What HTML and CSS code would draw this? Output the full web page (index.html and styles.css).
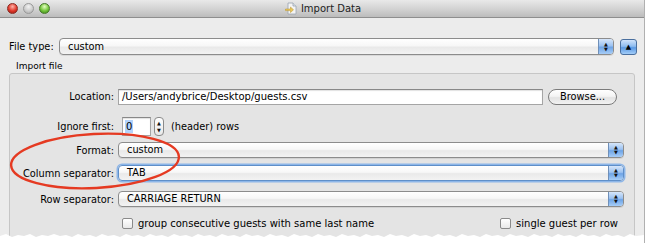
FILE: index.html
```html
<!DOCTYPE html>
<html>
<head>
<meta charset="utf-8">
<link rel="stylesheet" href="styles.css">
</head>
<body>
<div class="window">
  <div class="titlebar">
    <div class="lights">
      <span class="light red"></span>
      <span class="light gray"></span>
      <span class="light green"></span>
    </div>
    <div class="title">
      <svg class="doc-icon" width="13" height="13" viewBox="0 0 13 13">
        <path d="M3 1h5l3 3v8H3z" fill="#f4f4f4" stroke="#9aa3b0" stroke-width="0.8"/>
        <path d="M8 1v3h3" fill="#dde3ea" stroke="#9aa3b0" stroke-width="0.8"/>
        <path d="M0.5 7h5V5l3 2.8-3 2.8V8.6h-5z" fill="#e9c65a" stroke="#b8922a" stroke-width="0.5"/>
      </svg>
      <span>Import Data</span>
    </div>
  </div>

  <div class="filetype-row">
    <span class="label">File type:</span>
    <div class="select select-wide"><span class="val">custom</span><span class="arrows"><i>▲</i><i>▼</i></span></div>
    <div class="upbtn">▲</div>
  </div>

  <div class="group-label">Import file</div>
  <div class="group">
    <div class="row r1">
      <span class="label lab">Location:</span>
      <div class="field loc">/Users/andybrice/Desktop/guests.csv</div>
      <div class="button">Browse...</div>
    </div>
    <div class="row r2">
      <span class="label lab">Ignore first:</span>
      <div class="field num"><span class="sel">0</span></div>
      <div class="spinner"><i>▲</i><i>▼</i></div>
      <span class="label after">(header) rows</span>
    </div>
    <div class="row r3">
      <span class="label lab">Format:</span>
      <div class="select"><span class="val">custom</span><span class="arrows"><i>▲</i><i>▼</i></span></div>
    </div>
    <div class="row r4">
      <span class="label lab">Column separator:</span>
      <div class="select focus"><span class="val">TAB</span><span class="arrows"><i>▲</i><i>▼</i></span></div>
    </div>
    <div class="row r5">
      <span class="label lab">Row separator:</span>
      <div class="select"><span class="val">CARRIAGE RETURN</span><span class="arrows"><i>▲</i><i>▼</i></span></div>
    </div>
    <div class="row r6">
      <label class="check"><span class="box"></span>group consecutive guests with same last name</label>
      <label class="check"><span class="box"></span>single guest per row</label>
    </div>
  </div>

  <svg class="ring" width="200" height="70" viewBox="0 0 200 70">
    <ellipse cx="95" cy="33" rx="84" ry="27" transform="rotate(-3 95 33)" fill="none" stroke="#e53a22" stroke-width="2.4"/>
  </svg>

  <svg class="torn" width="645" height="10" viewBox="0 0 645 10" preserveAspectRatio="none">
    <path fill="#ffffff" d="M0 3 L6 1 L12 4 L18 2 L24 3 L30 1 L36 4 L42 2 L48 3 L54 1 L60 3 L66 2 L72 4 L78 1 L84 3 L90 2 L96 4 L102 1 L108 3 L114 2 L120 4 L126 1 L132 3 L138 2 L144 4 L150 1 L156 3 L162 2 L168 4 L174 1 L180 3 L186 2 L192 4 L198 1 L204 3 L210 2 L216 4 L222 1 L228 3 L234 2 L240 4 L246 1 L252 3 L258 2 L264 4 L270 1 L276 3 L282 2 L288 4 L294 1 L300 3 L306 2 L312 4 L318 1 L324 3 L330 2 L336 4 L342 1 L348 3 L354 2 L360 4 L366 1 L372 3 L378 2 L384 4 L390 1 L396 3 L402 2 L408 4 L414 1 L420 3 L426 2 L432 4 L438 1 L444 3 L450 2 L456 4 L462 1 L468 3 L474 2 L480 4 L486 1 L492 3 L498 2 L504 4 L510 1 L516 3 L522 2 L528 4 L534 1 L540 3 L546 2 L552 4 L558 1 L564 3 L570 2 L576 4 L582 1 L588 3 L594 2 L600 4 L606 1 L612 3 L618 2 L624 4 L630 1 L636 3 L645 2 L645 10 L0 10 Z"/>
  </svg>
</div>
</body>
</html>
```

FILE: styles.css
```css
* { box-sizing: border-box; }
html, body { margin: 0; padding: 0; }
body {
  width: 645px;
  height: 243px;
  overflow: hidden;
  font-family: "DejaVu Sans", "Lucida Grande", sans-serif;
  font-size: 9.8px;
  color: #000;
  background: #ffffff;
}
.window {
  position: relative;
  width: 645px;
  height: 243px;
  overflow: hidden;
  background: #ececec;
  border-right: 1px solid #b0b0b0;
}
.titlebar {
  position: relative;
  height: 18px;
  background: linear-gradient(#e9e9e9, #cfcfcf 60%, #bcbcbc);
  border-bottom: 1px solid #8e8e8e;
  display: flex;
  align-items: center;
  justify-content: center;
}
.lights {
  position: absolute;
  left: 7px;
  top: 3px;
  display: flex;
  gap: 5px;
}
.light {
  width: 11px;
  height: 11px;
  border-radius: 50%;
  display: block;
}
.light.red { background: radial-gradient(circle at 50% 30%, #ffb3a8, #e0372a 55%, #9b1a12); border: 1px solid #8a2a22; }
.light.gray { background: radial-gradient(circle at 50% 30%, #f2f2f2, #c9c9c9 60%, #a9a9a9); border: 1px solid #999; }
.light.green { background: radial-gradient(circle at 50% 30%, #e4ffc0, #72c43a 55%, #3b7f17); border: 1px solid #46792a; }
.title {
  display: flex;
  align-items: center;
  gap: 3px;
  font-size: 10px;
  color: #222;
  margin-left: 2px;
}
.doc-icon { display: block; }

.filetype-row {
  display: flex;
  align-items: center;
  height: 17px;
  margin-top: 20px;
  padding-left: 9px;
}
.filetype-row .label { width: 50px; }
.select {
  position: relative;
  flex: 1;
  height: 16px;
  border: 1px solid #8c8c8c;
  border-radius: 4px;
  background: linear-gradient(#ffffff, #f7f7f7 45%, #e9e9e9 55%, #f3f3f3);
  display: flex;
  align-items: center;
  overflow: hidden;
  box-shadow: 0 1px 0 rgba(0,0,0,0.08);
}
.select-wide { flex: none; width: 555px; height: 17px; }
.select .val { flex: 1; padding-left: 8px; line-height: 14px; }
.arrows {
  width: 15px;
  height: 100%;
  border-left: 1px solid #6f8fb8;
  background: linear-gradient(#d6e6fa, #9cc2f1 45%, #6ea4e6 55%, #a7cdf7);
  display: flex;
  flex-direction: column;
  align-items: center;
  justify-content: center;
}
.arrows i, .spinner i {
  font-style: normal;
  font-size: 5px;
  line-height: 5px;
  color: #111;
}
.upbtn {
  width: 17px;
  height: 16px;
  margin-left: 6px;
  border: 1px solid #4a6f9e;
  border-radius: 3px;
  background: linear-gradient(#d0e3fb, #8ebcf0 45%, #5b99e3 55%, #a3cdf8);
  font-size: 7px;
  display: flex;
  align-items: center;
  justify-content: center;
  color: #000;
}

.group-label {
  margin-top: 6px;
  padding-left: 16px;
  height: 12px;
  line-height: 11px;
  font-size: 9px;
}
.group {
  margin-left: 9px;
  width: 626px;
  height: 200px;
  background: #e4e4e4;
  border: 1px solid #c6c6c6;
  border-radius: 3px;
  padding-top: 14px;
}
.row {
  display: flex;
  align-items: center;
}
.lab {
  width: 104px;
  text-align: right;
  margin-right: 4px;
  flex: none;
}
.r1 { height: 17px; padding-right: 17px; }
.r2 { height: 19px; margin-top: 12px; }
.r3, .r4, .r5 { height: 16px; padding-right: 10px; }
.r3 { margin-top: 6px; }
.r4 { margin-top: 7px; }
.r5 { margin-top: 10px; }
.r6 { height: 12px; margin-top: 10px; justify-content: space-between; padding-left: 112px; padding-right: 16px; font-size: 10px; }

.field {
  height: 16px;
  background: #fff;
  border: 1px solid #a5a5a5;
  border-top-color: #888;
  box-shadow: inset 0 1px 1px rgba(0,0,0,0.12);
  display: flex;
  align-items: center;
  padding-left: 3px;
}
.loc { width: 425px; font-size: 10px; }
.button {
  margin-left: 5px;
  width: 69px;
  height: 16px;
  border: 1px solid #7b7b7b;
  border-radius: 9px;
  background: linear-gradient(#ffffff, #f4f4f4 45%, #e3e3e3 55%, #f2f2f2);
  display: flex;
  align-items: center;
  justify-content: center;
}
.num { width: 29px; height: 19px; margin-left: 4px; padding-left: 2px; font-size: 10px; }
.sel { background: #b3d3fb; padding: 0 1px; line-height: 13px; }
.spinner {
  margin-left: 3px;
  width: 10px;
  height: 19px;
  border: 1px solid #8a8a8a;
  border-radius: 4px;
  background: linear-gradient(#fff, #e8e8e8);
  display: flex;
  flex-direction: column;
  align-items: center;
  justify-content: center;
  gap: 2px;
}
.after { margin-left: 7px; }
.select.focus {
  border-color: #5f8fc9;
  box-shadow: 0 0 0 1.5px #8db6e8;
}
.check {
  display: flex;
  align-items: center;
  gap: 5px;
}
.box {
  width: 11px;
  height: 11px;
  border: 1px solid #8a8a8a;
  border-radius: 2px;
  background: linear-gradient(#fff, #e9e9e9);
  display: block;
}
.ring {
  position: absolute;
  left: 0;
  top: 128px;
}
.torn {
  position: absolute;
  left: 0;
  bottom: 0;
  display: block;
}
```
